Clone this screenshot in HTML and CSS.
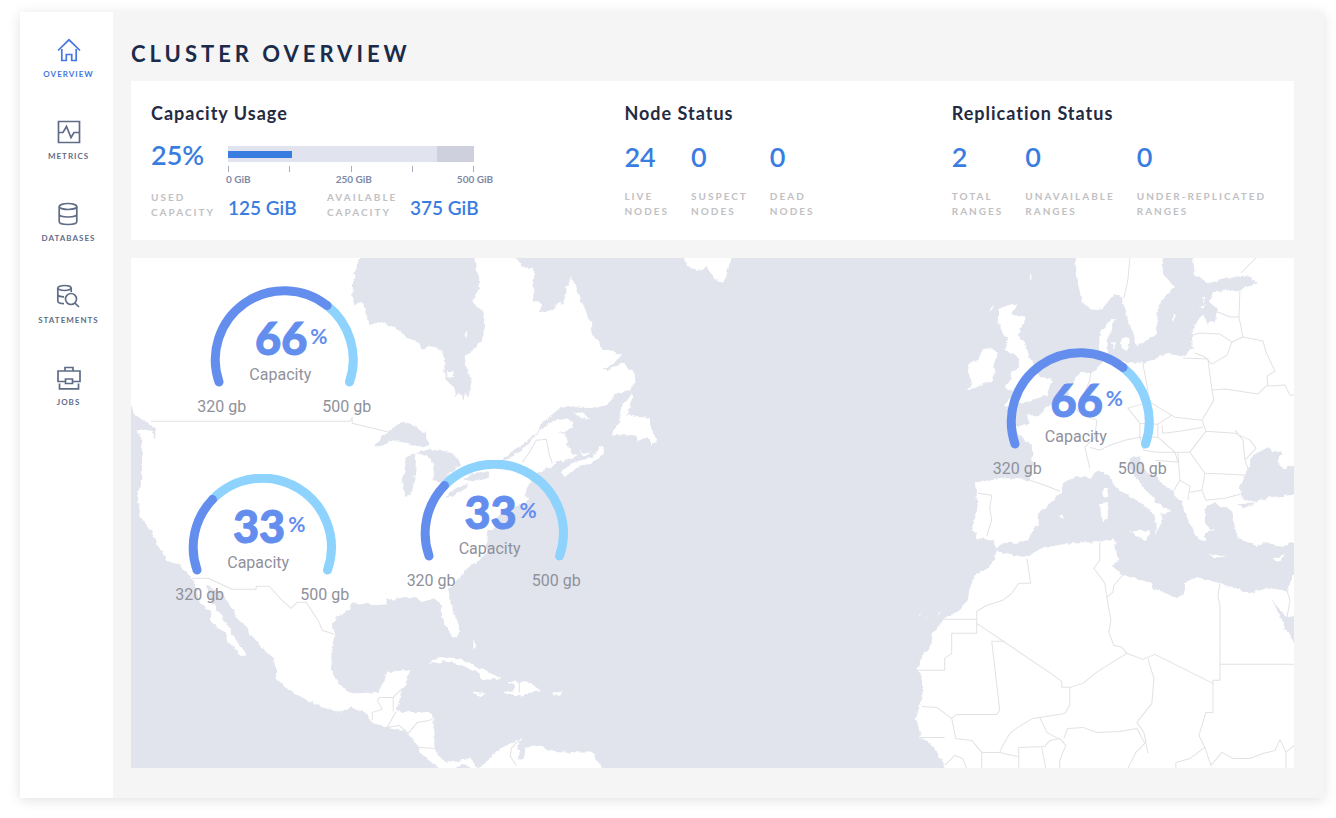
FILE: index.html
```html
<!DOCTYPE html>
<html lang="en">

<head>
    <meta charset="UTF-8">
    <meta name="viewport" content="width=device-width, initial-scale=1.0">
    <title>Cluster Overview</title>
    <link rel="stylesheet" href="styles.css">
</head>

<body>
    <div class="app">
        <nav class="sidebar">
            <a class="nav-item active" href="#overview">
                <svg viewBox="0 0 24 24"><path d="M1 12.500L12 1.800L23 12.500M4.800 11V22.500H9.300V16.500H14.700V22.500H19.200V11"/></svg>
                Overview
            </a>
            <a class="nav-item" href="#metrics">
                <svg viewBox="0 0 24 24"><path d="M1.500 1.500H22.500V22.500H1.500ZM1.500 12.500H6L9.500 6.500L14 17.500L17 12.500H22.500"/></svg>
                Metrics
            </a>
            <a class="nav-item" href="#databases">
                <svg viewBox="0 0 24 24"><ellipse cx="12" cy="4.500" rx="8.800" ry="3"/><path d="M3.200 4.500V19.500C3.200 23.500 20.800 23.500 20.800 19.500V4.500M3.200 12C3.200 16 20.800 16 20.800 12"/></svg>
                Databases
            </a>
            <a class="nav-item" href="#statements">
                <svg viewBox="0 0 24 24"><ellipse cx="8.500" cy="4" rx="6.700" ry="2.500"/><path d="M1.800 4V17C1.800 18.700 4.500 19.600 8 19.600M15.200 4V8M1.800 11C2.500 12.300 5 12.800 8 12.800M19 19.200L23 23"/><circle cx="15" cy="15" r="5.500"/></svg>
                Statements
            </a>
            <a class="nav-item" href="#jobs">
                <svg viewBox="0 0 24 24"><path d="M8 5V1.500H16V5M8.500 15.500H1V5H23V15.500H15.500M2.500 17.500V22.800H21.500V17.500M8.500 13H15.500V17.500H8.500Z"/></svg>
                Jobs
            </a>
        </nav>

        <main class="content">
            <h1>Cluster Overview</h1>

            <section class="summary">
                <div class="summary-group">
                    <h2>Capacity Usage</h2>
                    <div class="capacity">
                        <span class="value">25%</span>
                        <div class="capacity-chart">
                            <div class="bar">
                                <div class="bar-used"></div>
                                <div class="bar-reserved"></div>
                            </div>
                            <div class="ticks"><i></i><i></i><i></i><i></i><i></i></div>
                            <div class="tick-labels"><span>0 GiB</span><span>250 GiB</span><span>500 GiB</span></div>
                        </div>
                    </div>
                    <div class="capacity-totals">
                        <span class="label">Used<br>Capacity</span>
                        <span class="amount">125 GiB</span>
                        <span class="label">Available<br>Capacity</span>
                        <span class="amount">375 GiB</span>
                    </div>
                </div>

                <div class="summary-group">
                    <h2>Node Status</h2>
                    <div class="stats">
                        <div class="stat"><span class="value">24</span><span class="label">Live<br>Nodes</span></div>
                        <div class="stat"><span class="value">0</span><span class="label">Suspect<br>Nodes</span></div>
                        <div class="stat"><span class="value">0</span><span class="label">Dead<br>Nodes</span></div>
                    </div>
                </div>

                <div class="summary-group">
                    <h2>Replication Status</h2>
                    <div class="stats">
                        <div class="stat"><span class="value">2</span><span class="label">Total<br>Ranges</span></div>
                        <div class="stat"><span class="value">0</span><span class="label">Unavailable<br>Ranges</span></div>
                        <div class="stat"><span class="value">0</span><span class="label">Under-replicated<br>Ranges</span></div>
                    </div>
                </div>
            </section>

            <section class="map">
                <svg class="map-canvas" viewBox="132 258 1162 510">
                    <defs>
                        <!-- roughens the coastlines -->
                        <filter id="coast" filterUnits="userSpaceOnUse" x="112" y="238" width="1202" height="550">
                            <feTurbulence type="fractalNoise" baseFrequency="0.16" numOctaves="3" seed="4"/>
                            <feDisplacementMap in="SourceGraphic" scale="5" xChannelSelector="R" yChannelSelector="G"/>
                        </filter>
                    </defs>
                    <g filter="url(#coast)">
                        <g class="land">
                            <!-- North and Central America -->
                            <path d="M120 240H362V258L358 265L354 280L353 298L357 306L363 301L367 310L369 325L383 322L397 328L407 337L420 343L423 349L430 347L443 350L445 362L444 372L448 383L455 388L457 397L460 393L465 400V392L469 397L472 383L468 370L465 355L477 347L483 338L486 325L483 312L473 302L479 288L480 278L476 268L477 240H517V258L522 265L535 270L533 280L536 292L533 300L543 303L540 312L550 311L560 303L563 305L567 293V287L572 276L576 287L578 295L583 303L587 313L593 323L590 328L600 343L602 350L610 350L623 356L615 362L603 370L608 370L623 363L628 368L635 372L636 383L630 390L618 393L607 405L593 408L577 406L560 407L553 415L543 422L537 432L527 442L512 452L503 459L506 460L517 454L530 443L540 430L553 421L568 418L574 423L570 430L558 432L567 433L567 442L572 452L578 455L572 459L557 462L552 467L537 473L530 482L525 495L530 499L521 505L508 508L499 517L495 528L488 530L487 540L488 552L478 562L468 568L460 578L450 588V597L455 613L460 627L458 637L453 637L447 625L443 617L442 605L435 598L425 602L417 597L403 597L393 600L387 598L388 604L378 605L363 603L352 603L350 610L337 617L333 627L335 635L332 653L333 673L342 685L348 692L357 693L378 692L385 682L387 672L412 669L407 682L402 693L397 711L430 712L435 717V747L440 757L451 762L470 758L480 767L487 762L493 755L503 747L523 737L518 745L520 758L524 759L527 747L543 745L547 750L580 752L593 752L597 760L605 768V790H486L475 768L463 763L457 768V776L440 768L420 752V747L413 738L405 730L390 727L375 723L363 710L353 707L342 712L323 707L303 697L287 688L277 678L278 670L273 658L263 647L250 633L248 627L238 618L230 603L222 592L208 585L210 598L220 613L230 628L237 640L247 653L245 657L230 643L227 633L210 620L213 613L200 600L195 580L180 565L167 560L160 547L153 532L142 517L138 498L143 475V452L142 435L137 430L142 428L153 431L156 440L157 428L147 422L137 415L132 405L120 400Z"/>
                            <path d="M632 393L634 398L627 415L650 418L652 428L658 442L652 443L647 437L638 442L637 435L612 435L620 422L623 405Z"/>
                            <path d="M573 411L583 413L592 419L582 418ZM562 472L572 463L593 457L602 445L605 453L593 462L577 468L565 477ZM579 449L585 453L591 451L586 456Z"/>
                            <path d="M685 240V258L688 265L697 271L707 267L715 278L723 284L727 275L732 258V240ZM446 373L453 373L455 377L448 376ZM465 334L468 330L467 338Z"/>
                            <path d="M429 664L440 657L460 658L477 667L502 678L482 680L480 673L460 664L445 661ZM507 682L527 681L543 691L531 692L523 696L502 692L515 690L514 685ZM473 692L487 694L481 696ZM552 691H563L561 695H554ZM474 640L477 645L474 649Z"/>

                            <!-- Europe and the Near East -->
                            <path d="M1310 542L1293 542L1277 547L1267 542L1257 545L1238 538L1235 527L1232 510L1213 502L1205 508V522L1213 530L1205 532V542L1197 537L1193 528L1187 517L1182 502L1173 492L1157 478L1143 468L1140 456L1130 458L1130 468L1142 485L1157 502L1172 511L1160 513L1163 522L1155 534L1157 523L1153 513L1140 502L1117 488L1110 477L1100 470L1090 477H1077L1063 482L1062 492L1050 502L1038 515V525L1025 542L1003 543L998 548L992 539L977 538L972 525L977 515L978 495L975 482L1007 478L1030 480L1033 462L1032 445L1020 435L1015 427L1022 425L1030 422L1027 415L1040 415L1050 405L1067 398L1073 383L1080 372H1092L1103 362L1099 348L1100 332L1115 317L1112 330L1108 338L1107 355L1117 360L1127 362L1143 363L1170 353L1183 357L1193 348L1192 335L1195 322L1203 315L1208 323L1215 322L1217 310L1210 302L1213 292L1240 290L1257 283L1247 275L1230 278L1208 283L1195 275L1193 258V240H1310Z"/>
                            <path d="M1075 240V258L1078 282L1082 302L1092 310L1103 308L1115 293L1122 298L1127 315L1133 335L1136 346L1143 343L1157 335L1158 305L1167 295L1175 287L1163 272V240ZM1121 338L1130 338L1128 352L1122 348ZM1111 342L1116 343L1114 350ZM1172 322L1173 314L1176 316ZM1199 306L1206 304L1203 308ZM1202 298L1205 298L1204 302Z"/>
                            <path d="M1000 308L1017 303L1012 313L1026 317L1018 335L1025 342L1030 358L1037 368L1040 377L1052 380L1047 395L1027 402L1013 403L1003 407L1015 393L1005 388L1012 378L1010 372L1020 367L1018 357L1005 350L1008 338L1002 332L998 318ZM980 352L990 347L998 353L995 365L993 380L968 391L972 382L968 372L970 362L980 360ZM989 312L993 305L994 307ZM1029 279L1031 273L1032 280Z"/>
                            <path d="M1104 489L1108 487L1107 498L1104 496ZM1100 503L1108 502V518L1102 521ZM1130 531L1150 530L1147 542ZM1209 553L1226 556L1214 558ZM1273 558L1285 555L1279 561ZM1058 516L1062 513L1064 517L1061 518Z"/>

                            <!-- Africa -->
                            <path d="M998 550L1003 553L1027 557L1043 547L1077 542L1100 542L1113 538L1117 543L1115 550L1119 560L1113 567L1123 575L1150 582L1153 588L1178 598L1185 593V582L1198 577L1220 583L1250 593L1267 588L1287 590L1292 575L1310 572V790H945V768L943 760L930 742L920 737V730L916 718L923 697L922 680L917 668L923 655L932 643L933 633L945 618L960 610L968 600L970 587L975 575L990 567Z"/>
                            <path d="M918 614L921 615L919 617ZM926 616L928 617L927 619ZM938 614L940 610L940 613Z"/>
                        </g>
                        <g class="water">
                            <path d="M373 446L387 432L402 422L415 425L425 432L430 445L420 447L403 442L393 440L383 446ZM406 457L417 453L416 472L413 492L407 497L403 485L406 465ZM417 453L430 449L453 452L462 465L450 472L447 482L434 480L435 464L428 456ZM445 497L455 489L467 484L468 487L455 495ZM463 479L475 473L488 471L490 477L473 481Z"/>
                            <path d="M1240 488L1248 468L1253 455L1270 446L1272 452L1282 451L1277 462L1283 468L1310 462V493L1270 497L1253 502L1243 499ZM1236 504L1256 503L1244 508ZM1273 600L1287 617L1310 613V650L1294 643L1283 624Z"/>
                        </g>
                    </g>
                    <g class="borders">
                        <path d="M152 421H351L353 417V423L365 426L378 429L390 432M193 578H209L233 589H257V586H270L283 600L292 608L298 602H307L320 622L323 630L335 634"/>
                        <path d="M373 720V712L383 709L378 700L381 697H394V711M394 697L403 688M397 711L394 716L388 727L400 725L409 733L418 722L430 720L434 718M420 747L437 748M521 738L512 748L511 756L517 765M520 682V692M523 462L530 452L537 440L547 439L550 455L553 463"/>
                        <path d="M945 619H977V611L987 605L1003 600L1012 593L1019 583H1031L1027 558M977 619V633H952V653L945 658V670H917M977 623L1048 671L1062 681V687H1070L1083 683L1098 671L1127 653M1005 641H992L1000 710L997 714H957L952 718L937 707L922 706M1070 687V705L1065 713L1040 717L1033 718L1018 727L1010 733L1003 745L1000 752M952 718L956 738L972 740L982 752L1000 752L1018 756M1040 717L1047 732L1058 738M1019 768V747L1045 746L1050 740L1060 738L1066 745L1060 760V768M1042 747L1046 768M1064 738L1068 728L1083 727L1097 732L1120 731L1137 728"/>
                        <path d="M1100 542V560L1094 568L1105 583L1107 597L1113 592L1114 585L1123 575M1107 597L1111 620L1109 632L1114 645L1122 647L1127 653L1143 659L1155 654L1213 683V680H1220V605L1218 596L1220 583M1148 658L1154 678L1152 703L1137 722L1144 732L1148 753M1137 728L1145 743L1136 752L1128 768M1220 664H1294M1213 683V712H1206L1199 735L1205 747L1211 765L1222 752L1233 758L1250 758L1263 753L1275 750L1280 739L1286 752L1294 745M1176 768V762L1190 758L1205 747M1286 752V768M920 737L945 737M945 765L955 755L963 758L967 768M982 752V768M1287 590L1290 600L1287 617"/>
                        <path d="M1130 258L1128 280L1124 298M1256 258L1241 273M1240 290L1239 317L1230 317L1218 312M1239 317L1243 337M1193 335L1200 333L1220 334L1232 342L1243 337L1263 341L1266 352L1275 371L1267 376L1268 386M1232 342L1227 355L1212 364L1205 357L1195 353M1183 358L1208 359L1212 390L1225 389L1258 394L1266 386L1285 385L1290 395H1294M1212 390L1214 400L1202 420L1206 431L1235 433L1250 440L1256 448L1245 460M1143 363L1147 385L1150 402L1163 410L1175 417L1202 420M1150 402L1128 408L1140 423L1158 424L1172 415M1162 425L1163 433L1180 431L1203 427M1158 424V437L1175 452L1190 452L1206 431M1190 452L1205 473L1230 474L1248 475M1235 430L1243 440L1245 460L1248 468"/>
                        <path d="M1067 398L1075 408L1083 415L1097 420L1095 437L1085 447L1090 468M1090 447L1100 450L1110 445L1125 440L1140 437L1158 437M1140 437L1144 450L1157 452H1175L1178 462L1155 460M1178 453L1180 480L1190 486L1188 500M1205 473L1202 490L1190 492M1202 490L1206 500L1225 498L1240 494M1180 480L1174 490M1030 480L1045 485L1060 491M978 493L992 495L990 508L992 520L987 536M1092 365L1090 380L1084 395L1083 415M1140 423V437"/>
                    </g>
                </svg>

                <div class="gauge gauge-canada">
                    <svg class="gauge-arc" viewBox="0 0 148 102"><path class="rest" d="M117 19.500A69 69 0 0 1 139.500 96"/><path class="used" d="M9 96A69 69 0 0 1 117 19.500"/></svg>
                    <div class="gauge-value">66<sup>%</sup></div>
                    <div class="gauge-name">Capacity</div>
                    <div class="gauge-range"><span>320 gb</span><span>500 gb</span></div>
                </div>
                <div class="gauge gauge-west">
                    <svg class="gauge-arc" viewBox="0 0 148 102"><path class="rest" d="M24.500 25.500A69 69 0 0 1 139.500 96"/><path class="used" d="M9 96A69 69 0 0 1 24.500 25.500"/></svg>
                    <div class="gauge-value">33<sup>%</sup></div>
                    <div class="gauge-name">Capacity</div>
                    <div class="gauge-range"><span>320 gb</span><span>500 gb</span></div>
                </div>
                <div class="gauge gauge-east">
                    <svg class="gauge-arc" viewBox="0 0 148 102"><path class="rest" d="M24.500 25.500A69 69 0 0 1 139.500 96"/><path class="used" d="M9 96A69 69 0 0 1 24.500 25.500"/></svg>
                    <div class="gauge-value">33<sup>%</sup></div>
                    <div class="gauge-name">Capacity</div>
                    <div class="gauge-range"><span>320 gb</span><span>500 gb</span></div>
                </div>
                <div class="gauge gauge-europe">
                    <svg class="gauge-arc" viewBox="0 0 148 102"><path class="rest" d="M117 19.500A69 69 0 0 1 139.500 96"/><path class="used" d="M9 96A69 69 0 0 1 117 19.500"/></svg>
                    <div class="gauge-value">66<sup>%</sup></div>
                    <div class="gauge-name">Capacity</div>
                    <div class="gauge-range"><span>320 gb</span><span>500 gb</span></div>
                </div>
            </section>
        </main>
    </div>
</body>

</html>
```
FILE: styles.css
```css
* {
    box-sizing: border-box;
}

body {
    margin: 0;
    padding: 12px 12px 20px 20px;
    font-family: Lato, sans-serif;
    background: #fff;
    color: #242a42;
}

.app {
    display: flex;
    box-shadow: 0 2px 12px rgba(0, 0, 0, 0.12);
}

/* Sidebar */
.sidebar {
    flex: 0 0 93px;
    display: flex;
    flex-direction: column;
    align-items: center;
    gap: 41px;
    padding: 26px 0 0 4px;
    background: #fff;
}

.nav-item {
    display: flex;
    flex-direction: column;
    align-items: center;
    gap: 7px;
    color: #5f6c87;
    font-size: 8px;
    font-weight: 700;
    line-height: 10px;
    letter-spacing: 1px;
    text-transform: uppercase;
    text-decoration: none;
}

.nav-item.active {
    color: #4677e0;
}

.nav-item svg {
    width: 24px;
    height: 24px;
    fill: none;
    stroke: currentColor;
    stroke-width: 1.7;
}

/* Content */
.content {
    flex: 1;
    min-width: 0;
    padding: 25px 30px 30px 18px;
    background: #f5f5f5;
}

h1 {
    margin: 0 0 10px;
    color: #1b2b4b;
    font-size: 22px;
    font-weight: 700;
    line-height: 34px;
    letter-spacing: 4px;
    text-transform: uppercase;
}

h2 {
    margin: 0;
    font-size: 18px;
    font-weight: 700;
    line-height: 24px;
    letter-spacing: 1px;
}

.summary {
    display: grid;
    grid-template-columns: 473fr 327fr 322fr;
    padding: 20px;
    background: #fff;
}

.value {
    color: #3a7de1;
    font-size: 27px;
    font-weight: 600;
    line-height: 32px;
}

.label {
    color: #c1c1c3;
    font-size: 10px;
    font-weight: 700;
    line-height: 15px;
    letter-spacing: 2px;
    text-transform: uppercase;
    white-space: nowrap;
}

.amount {
    color: #3a7de1;
    font-size: 19px;
    font-weight: 600;
    line-height: 24px;
}

.capacity {
    display: grid;
    grid-template-columns: 77px 246px;
    padding-top: 14px;
}

.capacity-chart {
    padding-top: 7px;
}

.bar {
    display: flex;
    align-items: center;
    justify-content: space-between;
    height: 16px;
    background: #e1e4ee;
}

.bar-used {
    width: 26%;
    height: 7px;
    background: #3a7de1;
}

.bar-reserved {
    width: 15%;
    height: 16px;
    background: #cfd0de;
}

.ticks {
    display: flex;
    justify-content: space-between;
    margin-top: 4px;
}

.ticks i {
    width: 1px;
    height: 6px;
    background: #a9adba;
}

.tick-labels {
    display: flex;
    justify-content: space-between;
    margin: 1px -19px 0 -2px;
    color: #7d88a8;
    font-size: 10px;
    font-weight: 700;
    line-height: 13px;
}

.capacity-totals {
    display: grid;
    grid-template-columns: 77px 99px 83px auto;
    justify-content: start;
    align-items: end;
    padding-top: 4px;
}

.stats {
    display: flex;
    gap: 22px;
    padding-top: 16px;
}

.stat {
    display: flex;
    flex-direction: column;
    gap: 16px;
}

/* Map */
.map {
    position: relative;
    margin-top: 18px;
    background: #e1e4ed;
}

.map-canvas {
    display: block;
    width: 100%;
}

.land {
    fill: #fff;
}

.water {
    fill: #e1e4ed;
}

.borders {
    fill: none;
    stroke: #e2e2e6;
    stroke-linejoin: round;
}

.gauge {
    position: absolute;
    width: 174px;
    padding-top: 28px;
    color: #8f919b;
    font-family: Roboto, sans-serif;
    font-size: 16px;
    line-height: 20px;
}

.gauge-canada {
    left: 5.7%;
    top: 5.5%;
}

.gauge-west {
    left: 3.8%;
    top: 42.3%;
}

.gauge-east {
    left: 23.7%;
    top: 39.6%;
}

.gauge-europe {
    left: 74.1%;
    top: 17.6%;
}

.gauge-arc {
    position: absolute;
    top: 0;
    left: 13px;
    width: 148px;
    height: 102px;
    fill: none;
    stroke-width: 9;
    stroke-linecap: round;
}

.gauge-arc .used {
    stroke: #648eee;
}

.gauge-arc .rest {
    stroke: #8dd3fd;
}

.gauge-value {
    position: relative;
    display: flex;
    justify-content: center;
    padding-left: 14px;
    color: #648eee;
    font-family: Lato, sans-serif;
    font-size: 45px;
    font-weight: 900;
    line-height: 48px;
    -webkit-text-stroke: 1px #648eee;
}

.gauge-value sup {
    padding: 10px 0 0 3px;
    font-size: 21px;
    font-weight: 700;
    line-height: 24px;
    -webkit-text-stroke: 0;
}

.gauge-name {
    position: relative;
    padding: 3px 8px 0 0;
    text-align: center;
}

.gauge-range {
    display: flex;
    justify-content: space-between;
    padding-top: 12px;
}
```
